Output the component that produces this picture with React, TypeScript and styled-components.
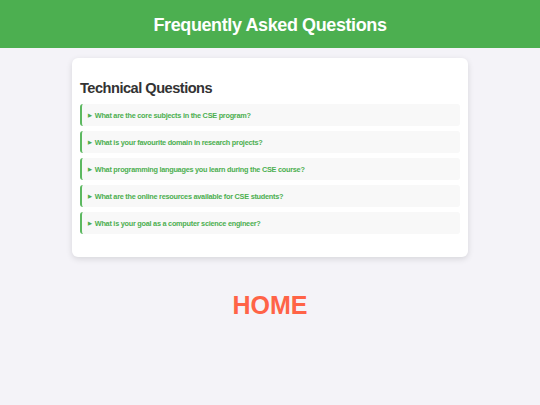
import styled, { createGlobalStyle } from 'styled-components';

const questions = [
  'What are the core subjects in the CSE program?',
  'What is your favourite domain in research projects?',
  'What programming languages you learn during the CSE course?',
  'What are the online resources available for CSE students?',
  'What is your goal as a computer science engineer?',
];

export default function App() {
  return (
    <>
      <GlobalStyle />
      <Header>
        <HeaderTitle>Frequently Asked Questions</HeaderTitle>
      </Header>
      <Main>
        <Card>
          <CardTitle>Technical Questions</CardTitle>
          <List>
            {questions.map(q => (
              <Item key={q}>
                <Summary>
                  <Arrow>▶</Arrow>
                  {q}
                </Summary>
              </Item>
            ))}
          </List>
        </Card>
        <Home>HOME</Home>
      </Main>
    </>
  );
}

const GlobalStyle = createGlobalStyle`
  html, body {
    margin: 0;
    padding: 0;
    background: #f4f3f8;
    font-family: 'Liberation Sans', Arial, sans-serif;
  }
`;
const Header = styled.header`
  height: 48px;
  background: #4caf50;
  display: flex;
  align-items: center;
  justify-content: center;
`;
const HeaderTitle = styled.h1`
  margin: 3px 0 0;
  color: #fff;
  font-size: 18px;
  letter-spacing: -0.4px;
  font-weight: bold;
`;
const Main = styled.main`
  display: flex;
  flex-direction: column;
  align-items: center;
  padding-top: 10px;
`;
const Card = styled.section`
  width: 396px;
  box-sizing: border-box;
  background: #fff;
  border-radius: 6px;
  box-shadow: 0 2px 6px rgba(0, 0, 0, 0.12);
  padding: 22px 8px 23px;
`;
const CardTitle = styled.h2`
  margin: 0 0 7px;
  color: #333;
  font-size: 14.6px;
  letter-spacing: -0.5px;
  line-height: 17px;
  font-weight: bold;
`;
const List = styled.div`
  display: flex;
  flex-direction: column;
  gap: 5px;
`;
const Item = styled.div`
  height: 22px;
  background: #f8f8f8;
  border-left: 2px solid #5cb860;
  border-radius: 3px;
  display: flex;
  align-items: center;
  padding-left: 6px;
`;
const Summary = styled.div`
  color: #4caf50;
  font-size: 7.3px;
  letter-spacing: -0.25px;
  font-weight: bold;
  display: flex;
  align-items: center;
`;
const Arrow = styled.span`
  font-size: 5px;
  margin-right: 3px;
`;
const Home = styled.div`
  margin-top: 34px;
  color: #ff6347;
  font-size: 25px;
  font-weight: bold;
`;
